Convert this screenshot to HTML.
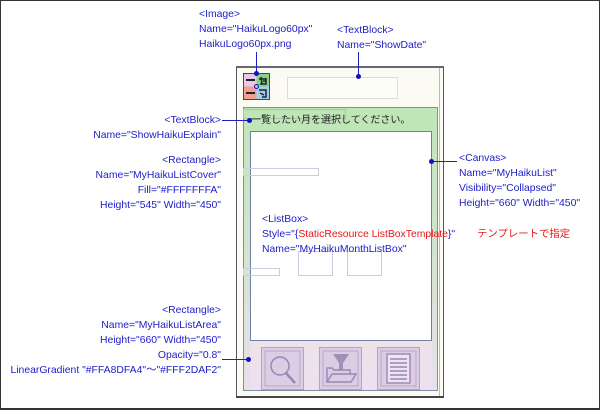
<!DOCTYPE html>
<html><head><meta charset="utf-8"><style>
*{margin:0;padding:0;box-sizing:border-box}
body{width:600px;height:412px;background:#fff;position:relative;overflow:hidden;font-family:"Liberation Sans","Noto Sans CJK JP",sans-serif;font-size:10.4px;color:#1c1cc8}
.fr{position:absolute;left:0;top:0;width:600px;height:410px;border:1px solid #333;border-bottom:2px solid #333}
.t{position:absolute;white-space:nowrap;line-height:15px}
.r{text-align:right;right:379px}
.red{color:#e81818}
.a{position:absolute}
.ln{position:absolute;background:#2020c0}
.dot{position:absolute;width:5px;height:5px;border-radius:50%;background:#1010c0}
</style></head><body>
<div class="fr"></div>
<div class="a" style="left:236px;top:66px;width:208px;height:332px;background:#fbfbf3;border:1px solid #556;border-top:2px solid #667;border-bottom:2px solid #444"></div>
<div class="a" style="left:439px;top:68px;width:1px;height:328px;background:#c9b8a0"></div>
<svg class="a" style="left:243px;top:73px" width="27" height="27">
<rect x="0.5" y="0.5" width="26" height="26" fill="#fff" stroke="#445"/>
<rect x="1" y="1" width="12.5" height="12.5" fill="#e8c8e8"/>
<rect x="13.5" y="1" width="12.5" height="12.5" fill="#8ad08a"/>
<rect x="1" y="13.5" width="12.5" height="12.5" fill="#f0a090"/>
<rect x="13.5" y="13.5" width="12.5" height="12.5" fill="#a0d0f0"/>
<rect x="3" y="6" width="9" height="2" fill="#222"/>
<rect x="3" y="19" width="9" height="2" fill="#222"/>
<path d="M16 6 H23 M17 11 H23 V5 M18 4 L19 11 M20 8 H23" stroke="#222" stroke-width="1.5" fill="none"/>
<path d="M16 17 H23 V24 H19 M17 20 L21 22" stroke="#222" stroke-width="1.5" fill="none"/>
</svg>
<div class="a" style="left:287px;top:77px;width:111px;height:22px;border:1px solid #d8dde4;background:#fdfdf8"></div>
<div class="a" style="left:243px;top:107px;width:195px;height:284px;border:1px solid #8090a0;background:linear-gradient(#bfe6b7 0,#bfe6b7 24px,#e6ebde 50%,#eee0f0 100%)"></div>
<div class="a" style="left:244px;top:108px;width:6px;height:282px;background:linear-gradient(#bfe6b7,#e8e0ea)"></div>
<div class="a" style="left:432px;top:108px;width:5px;height:282px;background:linear-gradient(#bfe6b7,#e8e0ea)"></div>
<div class="a" style="left:250px;top:131px;width:182px;height:210px;background:#fff;border:1px solid #7080a0"></div>
<div class="a" style="left:243px;top:168px;width:76px;height:8px;border:1px solid #c8d0e0"></div>
<div class="a" style="left:243px;top:268px;width:37px;height:8px;border:1px solid #c8d0e0"></div>
<div class="a" style="left:298px;top:251px;width:35px;height:25px;border:1px solid #c8d0e0"></div>
<div class="a" style="left:347px;top:251px;width:35px;height:25px;border:1px solid #c8d0e0"></div>
<div class="a" style="left:243px;top:109px;width:103px;height:10px;border:1px solid #a8c8a0"></div>
<div class="t" style="left:251px;top:113px;color:#222;font-size:10px">一覧したい月を選択してください。</div>
<div class="a" style="left:261px;top:347px;width:43px;height:43px;background:#dccce4;border:1px solid #b8a0c8">
<svg width="41" height="41" class="a" style="left:0;top:0"><rect x="3" y="3" width="35" height="35" fill="none" stroke="#b8a8cc"/><circle cx="18" cy="18" r="9" fill="none" stroke="#9a86b4" stroke-width="1.5"/><line x1="24" y1="25" x2="33" y2="35" stroke="#9a86b4" stroke-width="2.5"/></svg></div>
<div class="a" style="left:319px;top:347px;width:43px;height:43px;background:#dccce4;border:1px solid #b8a0c8">
<svg width="41" height="41" class="a" style="left:0;top:0"><rect x="3" y="3" width="35" height="35" fill="none" stroke="#b8a8cc"/><polygon points="13,6 29,6 21,18" fill="#a090b8"/><rect x="19" y="14" width="4" height="8" fill="#a090b8"/><path d="M7 34 L7 20 L12 20 L14 22 L30 22 L30 26 M7 34 L12 26 L36 26 L31 34 Z" fill="none" stroke="#9a86b4" stroke-width="1.4"/></svg></div>
<div class="a" style="left:377px;top:347px;width:43px;height:43px;background:#dccce4;border:1px solid #b8a0c8">
<svg width="41" height="41" class="a" style="left:0;top:0"><rect x="3" y="3" width="35" height="35" fill="none" stroke="#b8a8cc"/><rect x="9" y="6" width="23" height="29" fill="#ece4f0" stroke="#9a86b4" stroke-width="1.4"/><g stroke="#9a86b4" stroke-width="1.4"><line x1="12" y1="11" x2="29" y2="11"/><line x1="12" y1="15" x2="29" y2="15"/><line x1="12" y1="19" x2="29" y2="19"/><line x1="12" y1="23" x2="29" y2="23"/><line x1="12" y1="27" x2="29" y2="27"/><line x1="12" y1="31" x2="29" y2="31"/></g></svg></div>
<div class="t" style="left:199px;top:7px">&lt;Image&gt;</div>
<div class="t" style="left:199px;top:22px">Name="HaikuLogo60px"</div>
<div class="t" style="left:199px;top:37px">HaikuLogo60px.png</div>
<div class="t" style="left:337px;top:23px">&lt;TextBlock&gt;</div>
<div class="t" style="left:337px;top:38px">Name="ShowDate"</div>
<div class="ln" style="left:256px;top:52px;width:1px;height:22px"></div><div class="dot" style="left:254px;top:71px"></div><div class="dot" style="left:254px;top:84px;background:none;border:1px solid #1010c0"></div>
<div class="ln" style="left:358px;top:52px;width:1px;height:22px"></div><div class="dot" style="left:356px;top:74px"></div>
<div class="t r" style="top:113px">&lt;TextBlock&gt;</div>
<div class="t r" style="top:128px">Name="ShowHaikuExplain"</div>
<div class="ln" style="left:222px;top:120px;width:28px;height:1px"></div><div class="dot" style="left:247px;top:118px"></div>
<div class="t r" style="top:153px">&lt;Rectangle&gt;</div>
<div class="t r" style="top:168px">Name="MyHaikuListCover"</div>
<div class="t r" style="top:183px">Fill="#FFFFFFFA"</div>
<div class="t r" style="top:198px">Height="545" Width="450"</div>
<div class="t r" style="top:303px">&lt;Rectangle&gt;</div>
<div class="t r" style="top:318px">Name="MyHaikuListArea"</div>
<div class="t r" style="top:333px">Height="660" Width="450"</div>
<div class="t r" style="top:348px">Opacity="0.8"</div>
<div class="t r" style="top:363px">LinearGradient "#FFA8DFA4"～"#FFF2DAF2"</div>
<div class="ln" style="left:222px;top:359px;width:26px;height:1px"></div><div class="dot" style="left:246px;top:357px"></div>
<div class="t" style="left:459px;top:151px">&lt;Canvas&gt;</div>
<div class="t" style="left:459px;top:166px">Name="MyHaikuList"</div>
<div class="t" style="left:459px;top:181px">Visibility="Collapsed"</div>
<div class="t" style="left:459px;top:196px">Height="660" Width="450"</div>
<div class="ln" style="left:431px;top:161px;width:26px;height:1px"></div><div class="dot" style="left:429px;top:159px"></div>
<div class="t" style="left:262px;top:212px">&lt;ListBox&gt;</div>
<div class="t" style="left:262px;top:227px">Style="{<span class="red">StaticResource ListBoxTemplate</span>}"</div>
<div class="t red" style="left:477px;top:227px">テンプレートで指定</div>
<div class="t" style="left:262px;top:242px">Name="MyHaikuMonthListBox"</div>
</body></html>
